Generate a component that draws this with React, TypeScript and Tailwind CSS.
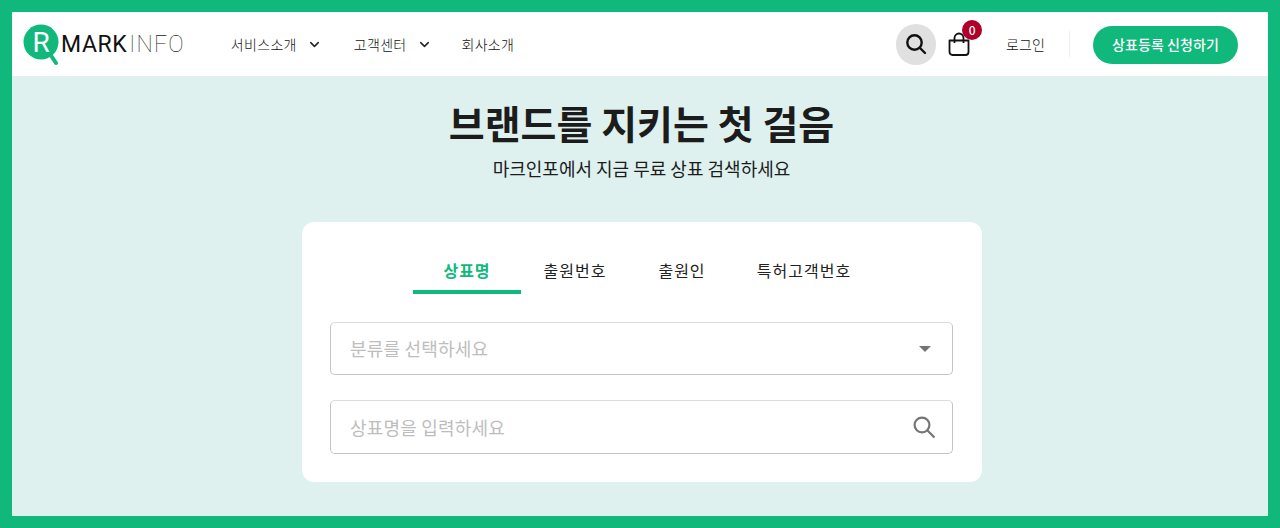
import { ChevronDown } from "lucide-react";

const font = { fontFamily: '"Noto Sans CJK KR", sans-serif' };

function Logo() {
  return (
    <div className="flex items-center">
      <svg width="38" height="44" viewBox="0 0 38 44" className="mt-[3px]">
        <circle cx="18" cy="18" r="17.5" fill="#10b97b" />
        <line x1="27" y1="30" x2="33" y2="39" stroke="#10b97b" strokeWidth="4" strokeLinecap="round" />
        <text x="9.5" y="28" fontFamily="Roboto, sans-serif" fontSize="28" fontWeight="400" fill="#fff">
          R
        </text>
      </svg>
      <span className="text-[23px] leading-none tracking-[0.6px] text-[#111]" style={{ fontFamily: '"Roboto", sans-serif' }}>
        <span className="font-normal">MARK</span>
        <span className="ml-[2px] font-thin tracking-[1.2px] text-[#222]">INFO</span>
      </span>
    </div>
  );
}

function NavItem({ label, arrow }: { label: string; arrow?: boolean }) {
  return (
    <div className="flex items-center text-[14px] font-light tracking-[0.3px] text-[#111]">
      <span>{label}</span>
      {arrow && <ChevronDown className="ml-[10px] text-[#222]" size={15} strokeWidth={2.4} />}
    </div>
  );
}

function Header() {
  return (
    <header className="flex h-[64px] items-center bg-white pl-[11px] pr-[30px]">
      <Logo />
      <nav className="ml-[46px] flex items-center">
        <NavItem label="서비스소개" arrow />
        <div className="ml-[32px]">
          <NavItem label="고객센터" arrow />
        </div>
        <div className="ml-[30px]">
          <NavItem label="회사소개" />
        </div>
      </nav>
      <div className="ml-auto flex items-center">
        <div className="flex h-[41px] w-[40px] items-center justify-center rounded-full bg-[#e0e0e0]">
          <svg width="22" height="22" viewBox="0 0 22 22" fill="none" stroke="#111" strokeWidth="2.4" strokeLinecap="round">
            <circle cx="9.5" cy="9.5" r="7.2" />
            <line x1="15" y1="15" x2="20" y2="20" />
          </svg>
        </div>
        <div className="relative ml-[11px] h-[24px] w-[26px]">
          <svg width="24" height="24" viewBox="0 0 24 24" fill="none" stroke="#111" strokeWidth="1.8" strokeLinejoin="round">
            <path d="M2.5 8.5h19v11.5a3 3 0 0 1-3 3h-13a3 3 0 0 1-3-3z" />
            <path d="M7.5 11V6a4.5 4.5 0 0 1 9 0v5" />
          </svg>
          <span className="absolute left-[15px] top-[-12px] flex h-[20px] w-[20px] items-center justify-center rounded-full bg-[#b0002a] text-[12px] font-medium text-white">
            0
          </span>
        </div>
        <span className="ml-[33px] text-[14px] font-light tracking-[0.1px] text-[#111]">로그인</span>
        <div className="ml-[24px] h-[26px] w-px bg-[#eeeeee]" />
        <button className="ml-[23px] mt-[1px] h-[38px] w-[145px] rounded-full bg-[#10b97b] text-[14px] font-medium tracking-[0.1px] text-white">
          상표등록 신청하기
        </button>
      </div>
    </header>
  );
}

function Tab({ label, active, width }: { label: string; active?: boolean; width: string }) {
  return (
    <div
      className={`flex h-[43px] items-center justify-center border-b-[4px] pb-[1px] text-[16px] tracking-[1px] ${width} ${
        active ? "border-[#10b97b] font-bold text-[#10b97b]" : "border-transparent text-[#222]"
      }`}
    >
      {label}
    </div>
  );
}

export default function App() {
  return (
    <div className="flex h-[528px] flex-col overflow-hidden border-[12px] border-[#10b97b] bg-[#def1ee]" style={font}>
      <Header />
      <main className="flex flex-col items-center pl-[3px]">
        <h1 className="mt-[19px] h-[54px] text-[39px] font-bold leading-[54px] text-[#1c1c1c]">브랜드를 지키는 첫 걸음</h1>
        <p className="mt-[6px] text-[18px] leading-[26px] text-[#1c1c1c]">마크인포에서 지금 무료 상표 검색하세요</p>
        <section className="ml-[1px] mt-[41px] flex h-[260px] w-[680px] flex-col rounded-[12px] bg-white px-[28px] pt-[29px]">
          <div className="flex pl-[83px]">
            <Tab label="상표명" active width="w-[108px]" />
            <Tab label="출원번호" width="w-[108px]" />
            <Tab label="출원인" width="w-[106px]" />
            <Tab label="특허고객번호" width="w-[138px]" />
          </div>
          <div className="mt-[28px] flex h-[53px] w-[623px] items-center justify-between rounded-[5px] border border-[#c4c4c4] border-t-[#dcdcdc] pl-[19px] pr-[21px] text-[18px] tracking-[0.2px] text-[#bdbdbd]">
            <span>분류를 선택하세요</span>
            <svg width="12" height="6" viewBox="0 0 12 6">
              <path d="M0 0h12L6 6z" fill="#757575" />
            </svg>
          </div>
          <div className="mt-[25px] flex h-[54px] w-[623px] items-center justify-between rounded-[5px] border border-[#c4c4c4] border-t-[#dcdcdc] pl-[19px] pr-[16px] text-[18px] tracking-[0.2px] text-[#bdbdbd]">
            <span>상표명을 입력하세요</span>
            <svg width="24" height="24" viewBox="0 0 24 24" fill="none" stroke="#757575" strokeWidth="2.2">
              <circle cx="10" cy="10" r="7.4" />
              <line x1="15.5" y1="15.5" x2="22.5" y2="22.5" />
            </svg>
          </div>
        </section>
      </main>
    </div>
  );
}
